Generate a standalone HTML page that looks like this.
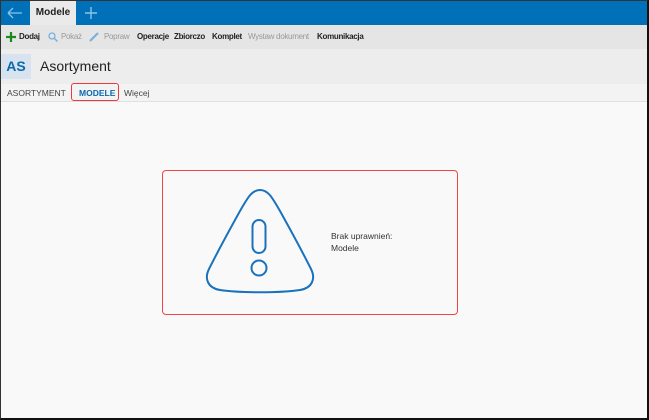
<!DOCTYPE html>
<html><head><meta charset="utf-8"><style>
*{margin:0;padding:0;box-sizing:border-box}
body{width:649px;height:420px;overflow:hidden;background:#f9f9f9;font-family:"Liberation Sans",sans-serif;position:relative}
.frame{position:absolute;inset:0;border:1px solid #333;border-right:2px solid #111;border-bottom:2px solid #111;pointer-events:none}
.top{position:absolute;left:0;top:0;width:649px;height:25px;background:#0070b8;border-top:1px solid #9cc}
.tab{position:absolute;left:30px;top:1px;width:46px;height:24px;background:#eaeaea;font-size:10px;font-weight:bold;color:#222;line-height:24px;text-align:center}
.tb{position:absolute;left:0;top:25px;width:649px;height:24px;background:#e5e5e5;font-size:8px;letter-spacing:-0.3px;font-weight:bold;color:#222;line-height:24px}
.tb span{position:absolute;white-space:nowrap}
.g{color:#999;font-weight:normal}
.hd{position:absolute;left:0;top:49px;width:649px;height:35px;background:#ededed}
.as{position:absolute;left:1px;top:5px;width:30px;height:25px;background:#d7e4ef;color:#0a68ad;font-weight:bold;font-size:14px;line-height:25px;text-align:center}
.tt{position:absolute;left:40px;top:9px;font-size:14px;color:#222}
.tabs{position:absolute;left:0;top:84px;width:649px;height:18px;background:#f3f3f3;border-bottom:1px solid #e0e0e0;font-size:8.5px;line-height:18px;color:#444}
.tabs span{position:absolute}
.red1{position:absolute;left:71px;top:83px;width:48px;height:18px;border:1.5px solid #e53c3c;border-radius:3px}
.red2{position:absolute;left:162px;top:170px;width:296px;height:145px;border:1.5px solid #f04545;border-radius:4px}
.msg{position:absolute;left:331px;top:230px;font-size:8.5px;color:#333;line-height:12px}
</style></head><body>
<div class="top">
<svg style="position:absolute;left:6px;top:5px" width="18" height="14"><path d="M2 7H16M2 7L7 2M2 7L7 12" stroke="#8ec2e6" stroke-width="1.3" fill="none"/></svg>
<svg style="position:absolute;left:84px;top:5px" width="14" height="14"><path d="M7 1V13M1 7H13" stroke="#8ec2e6" stroke-width="1.4"/></svg>
</div>
<div class="tab">Modele</div>
<div class="tb">
<svg style="position:absolute;left:6px;top:7px" width="10" height="10"><path d="M5 0V10M0 5H10" stroke="#1a8a1a" stroke-width="2.2"/></svg>
<span style="left:19px">Dodaj</span>
<svg style="position:absolute;left:48px;top:7px" width="10" height="10"><circle cx="4" cy="4" r="3" fill="none" stroke="#7ab0dd" stroke-width="1.3"/><path d="M6 6L9.5 9.5" stroke="#7ab0dd" stroke-width="1.5"/></svg>
<span class="g" style="left:61px">Pokaż</span>
<svg style="position:absolute;left:89px;top:7px" width="11" height="10"><path d="M1 9L9 1" stroke="#7ab0dd" stroke-width="2.2"/></svg>
<span class="g" style="left:104px">Popraw</span>
<span style="left:137px">Operacje</span>
<span style="left:174px">Zbiorczo</span>
<span style="left:212px">Komplet</span>
<span class="g" style="left:248px">Wystaw dokument</span>
<span style="left:317px">Komunikacja</span>
</div>
<div class="hd"><div class="as">AS</div><div class="tt">Asortyment</div></div>
<div class="tabs">
<span style="left:7px">ASORTYMENT</span>
<span style="left:79px;color:#0a68ad;font-weight:bold">MODELE</span>
<span style="left:124px">Więcej</span>
</div>
<div class="red1"></div>
<div class="red2"></div>
<svg style="position:absolute;left:200px;top:185px" width="120" height="115">
<path d="M60 5 C52 5 48 12 40 26 C30 44 16 70 9 84 C4 94 8 103 20 105 C40 108 80 108 100 105 C112 103 116 94 111 84 C104 70 90 44 80 26 C72 12 68 5 60 5Z" fill="none" stroke="#1a72bc" stroke-width="2"/>
<rect x="52.5" y="35" width="13" height="33" rx="6.5" fill="none" stroke="#1a72bc" stroke-width="2"/>
<circle cx="59" cy="83" r="7.5" fill="none" stroke="#1a72bc" stroke-width="2"/>
</svg>
<div class="msg">Brak uprawnień:<br>Modele</div>
<div class="frame"></div>
</body></html>
